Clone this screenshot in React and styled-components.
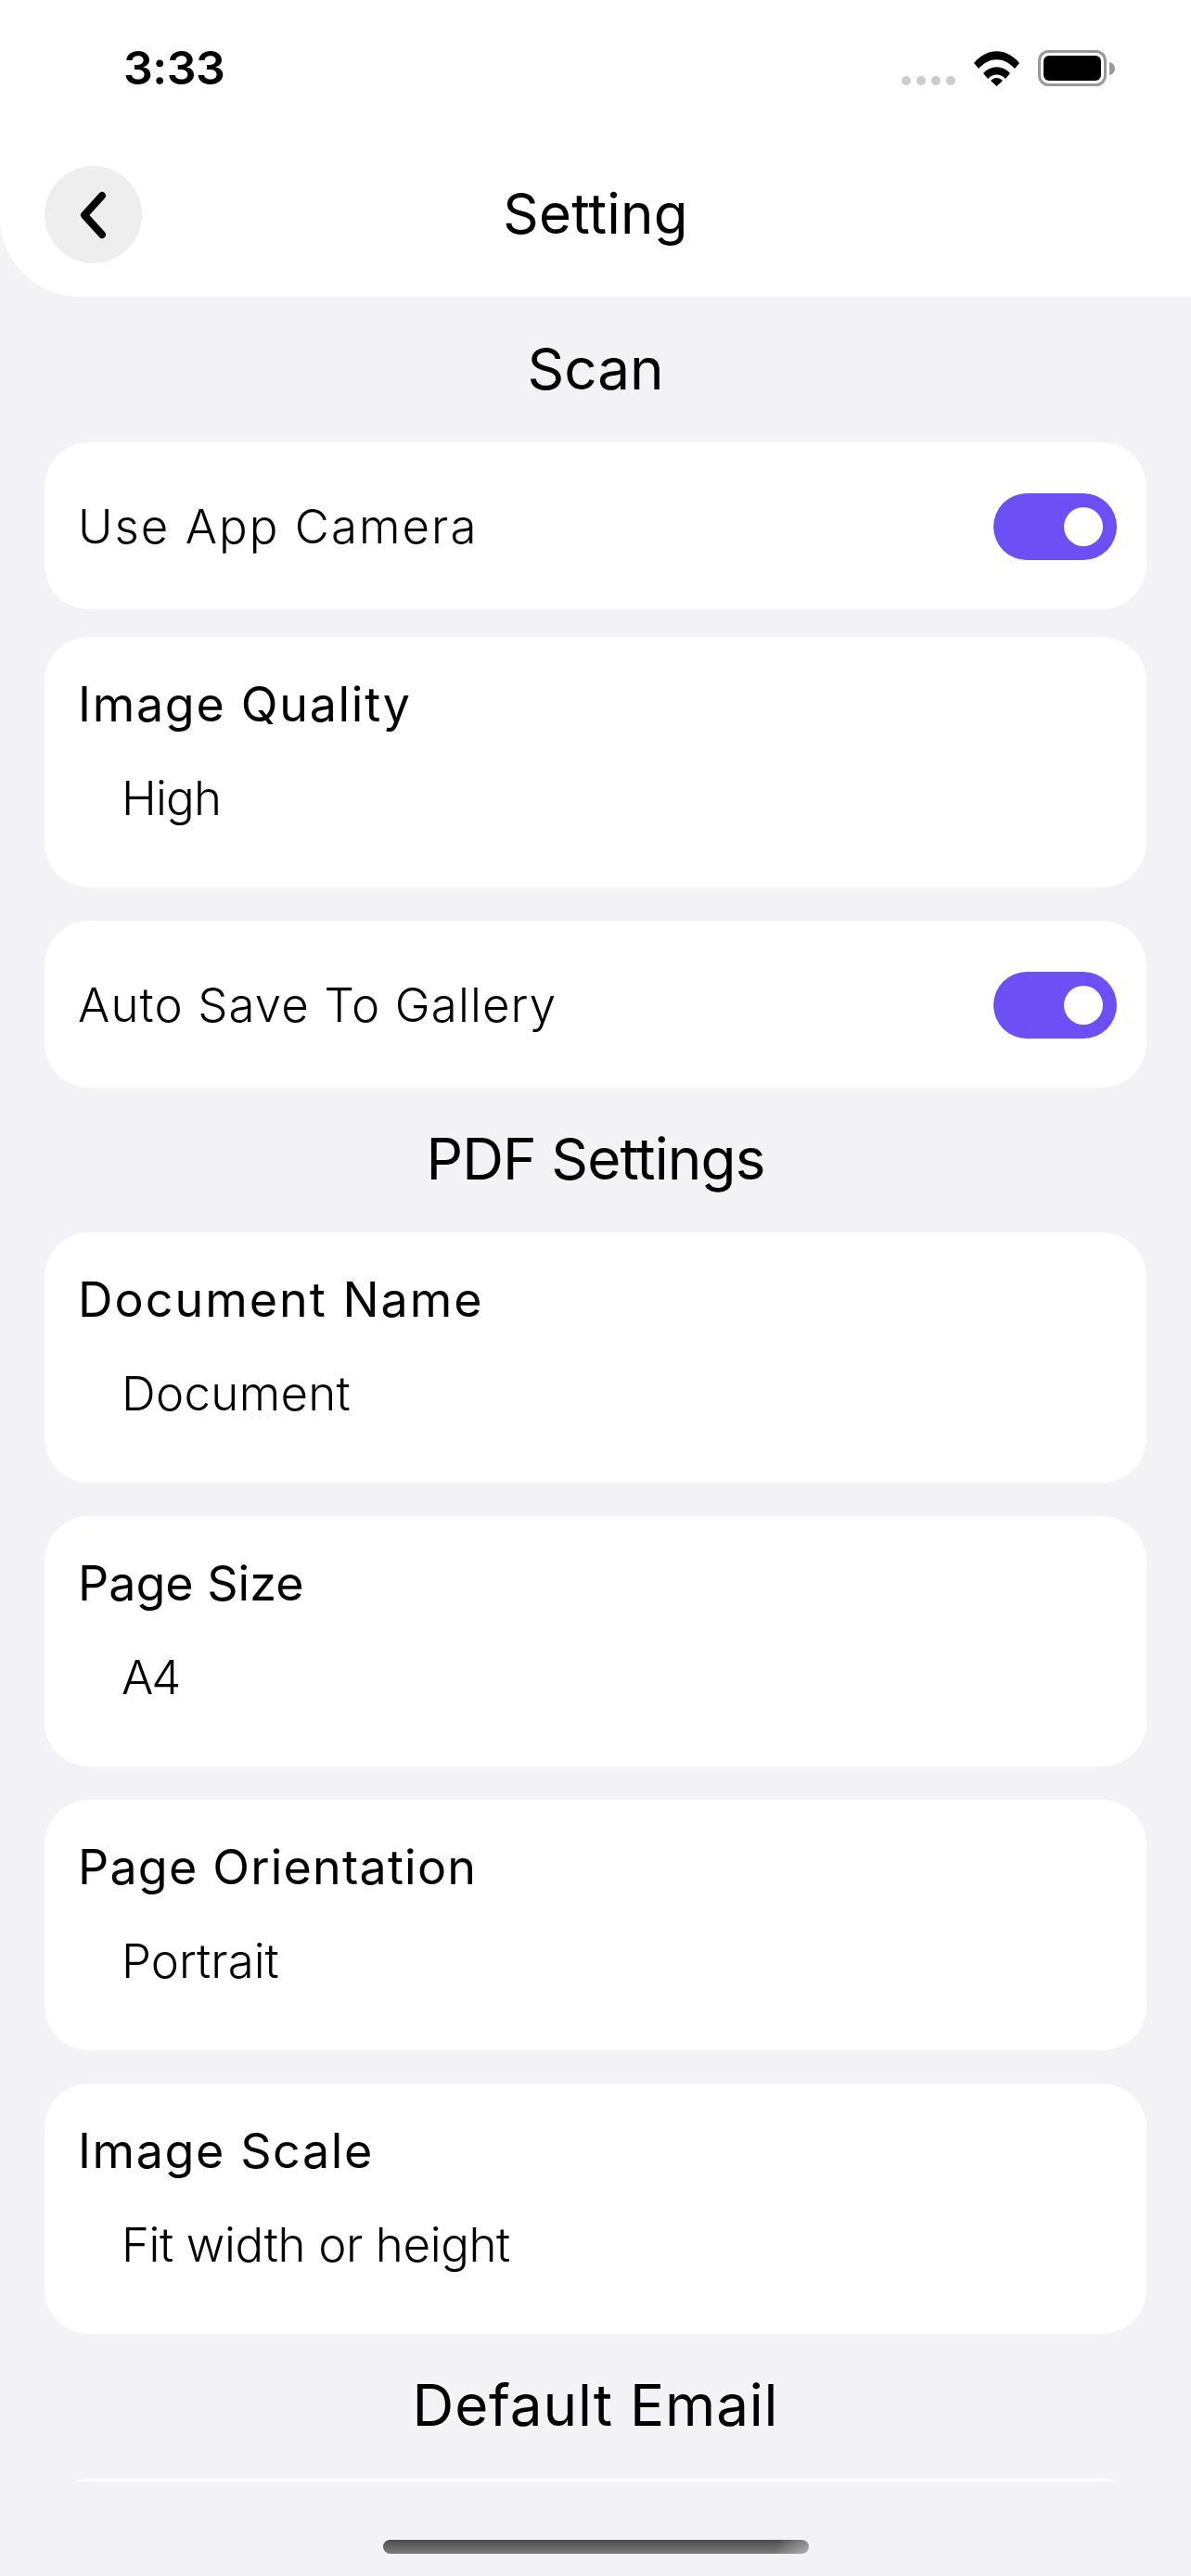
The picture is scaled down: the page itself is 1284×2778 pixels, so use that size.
import React from 'react';
import styled, {createGlobalStyle} from 'styled-components';

const GlobalStyle = createGlobalStyle`
  html, body {
    margin: 0;
    padding: 0;
    background: #f2f2f7;
  }
  * {
    box-sizing: border-box;
  }
`;

const Screen = styled.div`
  position: relative;
  width: 1284px;
  height: 2778px;
  overflow: hidden;
  background: #f2f2f7;
  color: #000;
  font-family: Inter, "Noto Sans", sans-serif;
`;

const Header = styled.header`
  height: 320px;
  background: #fff;
  border-bottom-left-radius: 86px;
`;

const StatusBar = styled.div`
  height: 179px;
  padding: 47px 82px 0 133px;
  display: flex;
  justify-content: space-between;
  align-items: flex-start;
`;

const Time = styled.span`
  font-size: 50px;
  line-height: 52px;
  font-weight: 600;
  letter-spacing: -0.5px;
`;

const StatusIcons = styled.div`
  display: flex;
  align-items: flex-start;
  padding-top: 6px;
`;

const NavRow = styled.div`
  position: relative;
  height: 105px;
  padding-left: 48px;
  display: flex;
  align-items: center;
`;

const BackButton = styled.button`
  width: 105px;
  height: 105px;
  border: 0;
  padding: 0;
  border-radius: 50%;
  background: #eeeeee;
  display: flex;
  align-items: center;
  justify-content: center;
`;

const NavTitle = styled.h1`
  position: absolute;
  left: 0;
  right: 0;
  top: -1px;
  margin: 0;
  text-align: center;
  font-size: 60px;
  line-height: 105px;
  font-weight: 400;
  letter-spacing: 0.2px;
`;

const SectionTitle = styled.h2`
  margin: 0;
  height: 156px;
  padding-bottom: 3px;
  display: flex;
  align-items: center;
  justify-content: center;
  font-size: 62px;
  font-weight: 400;
  letter-spacing: ${(p) => p.$tracking || 0}px;
`;

const Content = styled.main`
  padding: 1px 48px 0;
  display: flex;
  flex-direction: column;
`;

const ToggleCard = styled.div`
  height: 180px;
  margin-bottom: ${(p) => p.$gap || 0}px;
  padding: 2px 32px 0 36px;
  background: #fff;
  border-radius: 48px;
  display: flex;
  align-items: center;
  justify-content: space-between;
`;

const DetailCard = styled.div`
  height: 270px;
  margin-bottom: ${(p) => p.$gap || 0}px;
  padding: 43px 36px 0;
  background: #fff;
  border-radius: 48px;
`;

const RowLabel = styled.span`
  font-size: 51px;
  line-height: 60px;
  font-weight: 300;
  letter-spacing: ${(p) => p.$tracking}px;
`;

const FieldLabel = styled.div`
  font-size: 52px;
  line-height: 60px;
  font-weight: 400;
  letter-spacing: ${(p) => p.$tracking}px;
`;

const FieldValue = styled.div`
  margin-top: 41px;
  padding-left: 47px;
  font-size: 51px;
  line-height: 60px;
  font-weight: 300;
  letter-spacing: ${(p) => p.$tracking || 0}px;
`;

const Track = styled.div`
  width: 133px;
  height: 72px;
  padding-right: 15px;
  border-radius: 36px;
  background: #6c50f5;
  display: flex;
  align-items: center;
  justify-content: flex-end;
`;

const Knob = styled.div`
  width: 42px;
  height: 42px;
  border-radius: 50%;
  background: #fff;
`;

/* the email card is scrolled off, only its top edge shows above the fold */
const EmailClip = styled.div`
  height: 3px;
  overflow: hidden;
`;

const EmailCard = styled.div`
  height: 180px;
  background: #fff;
  border-radius: 48px;
`;

const HomeIndicator = styled.div`
  position: absolute;
  left: 413px;
  top: 2739px;
  width: 459px;
  height: 15px;
  border-radius: 8px;
  background:
    linear-gradient(105deg, rgba(255, 255, 255, 0) 92%, rgba(255, 255, 255, 0.4) 100%),
    linear-gradient(180deg, #4c4c4c 0%, #7c7c7c 100%);
`;

const Toggle = () => (
  <Track>
    <Knob />
  </Track>
);

const StatusGlyphs = () => (
  <svg width="230" height="42" viewBox="973 52 230 42" aria-hidden="true">
    <g fill="#cccccc">
      <circle cx="978" cy="86" r="5" />
      <circle cx="994" cy="86" r="5" />
      <circle cx="1010" cy="86" r="5" />
      <circle cx="1026" cy="86" r="5" />
    </g>
    <path
      d="M1051 67 C1065 50 1086 50 1100 67 L1095 73 C1083 60 1068 60 1056 73 Z M1061 78 C1069 69 1082 69 1090 78 L1085 84 C1080 78 1071 78 1066 84 Z M1069 86 C1073 82 1078 82 1082 86 L1075.5 92 Z"
      fill="#000"
    />
    <rect x="1121.5" y="54.5" width="71" height="36" rx="10" fill="none" stroke="#999999" strokeWidth="3" />
    <rect x="1126" y="59" width="62" height="27" rx="6" fill="#000" />
    <path d="M1197 66 C1201 67 1203 70 1203 73 C1203 76 1201 79 1197 80 Z" fill="#999999" />
  </svg>
);

const ChevronLeft = () => (
  <svg width="32" height="52" viewBox="0 0 32 52" aria-hidden="true">
    <path d="M25 5 L6 26 L25 47" fill="none" stroke="#000" strokeWidth="8" strokeLinecap="round" strokeLinejoin="round" />
  </svg>
);

const pdfFields = [
  {label: 'Document Name', value: 'Document', labelTracking: 2, valueTracking: 0.3},
  {label: 'Page Size', value: 'A4', labelTracking: 0, valueTracking: -2},
  {label: 'Page Orientation', value: 'Portrait', labelTracking: 1.2, valueTracking: 0},
  {label: 'Image Scale', value: 'Fit width or height', labelTracking: 1.6, valueTracking: -0.4},
];

const App = () => {
  return (
    <Screen>
      <GlobalStyle />
      <Header>
        <StatusBar>
          <Time>3:33</Time>
          <StatusIcons>
            <StatusGlyphs />
          </StatusIcons>
        </StatusBar>
        <NavRow>
          <BackButton>
            <ChevronLeft />
          </BackButton>
          <NavTitle>Setting</NavTitle>
        </NavRow>
      </Header>
      <Content>
        <SectionTitle>Scan</SectionTitle>
        <ToggleCard $gap={30}>
          <RowLabel $tracking={2}>Use App Camera</RowLabel>
          <Toggle />
        </ToggleCard>
        <DetailCard $gap={36}>
          <FieldLabel $tracking={1.7}>Image Quality</FieldLabel>
          <FieldValue $tracking={-0.8}>High</FieldValue>
        </DetailCard>
        <ToggleCard>
          <RowLabel $tracking={1.1}>Auto Save To Gallery</RowLabel>
          <Toggle />
        </ToggleCard>
        <SectionTitle $tracking={-0.9}>PDF Settings</SectionTitle>
        {pdfFields.map((field, i) => (
          <DetailCard key={field.label} $gap={i < pdfFields.length - 1 ? 36 : 0}>
            <FieldLabel $tracking={field.labelTracking}>{field.label}</FieldLabel>
            <FieldValue $tracking={field.valueTracking}>{field.value}</FieldValue>
          </DetailCard>
        ))}
        <SectionTitle $tracking={0.8}>Default Email</SectionTitle>
        <EmailClip>
          <EmailCard />
        </EmailClip>
      </Content>
      <HomeIndicator />
    </Screen>
  );
};

export default App;
